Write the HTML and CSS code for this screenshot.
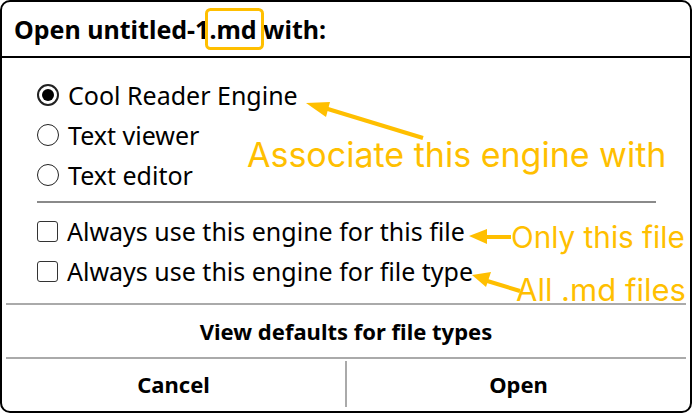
FILE: index.html
```html
<!DOCTYPE html>
<html>
<head>
<meta charset="utf-8">
<link rel="stylesheet" href="styles.css">
</head>
<body>
<div class="dialog">
  <div class="title">Open untitled-1<span class="hl">.md</span> with:</div>
  <div class="body">
    <div class="group">
      <div class="row"><span class="radio checked"></span><span class="label">Cool Reader Engine</span></div>
      <div class="row"><span class="radio"></span><span class="label">Text viewer</span></div>
      <div class="row"><span class="radio"></span><span class="label">Text editor</span></div>
    </div>
    <div class="inner-sep"></div>
    <div class="group">
      <div class="row"><span class="check"></span><span class="label">Always use this engine for this file</span></div>
      <div class="row"><span class="check"></span><span class="label">Always use this engine for file type</span></div>
    </div>
  </div>
  <div class="btn-single">View defaults for file types</div>
  <div class="btn-pair"><div class="btn">Cancel</div><div class="btn">Open</div></div>

  <svg class="arrows" width="692" height="413" viewBox="0 0 692 413">
    <rect x="206.5" y="9.5" width="56" height="39" rx="4" fill="none" stroke="#ffbf00" stroke-width="3"/>
    <g fill="#ffbf00" stroke="#ffbf00" stroke-linecap="butt">
      <line x1="423" y1="138" x2="318" y2="106" stroke-width="4"/>
      <polygon points="306,103 330,102 326,117" stroke="none"/>
      <line x1="511" y1="237" x2="482" y2="237" stroke-width="4"/>
      <polygon points="469,236 487,229 487,244" stroke="none"/>
      <line x1="520" y1="291" x2="484" y2="280" stroke-width="4"/>
      <polygon points="472,275 491,272 486,287" stroke="none"/>
    </g>
  </svg>
  <div class="note note-assoc">Associate this engine with</div>
  <div class="note note-only">Only this file</div>
  <div class="note note-all">All .md files</div>
</div>
</body>
</html>
```
FILE: styles.css
```css
* { box-sizing: border-box; }
html, body { margin: 0; padding: 0; background: #fff; }
body { width: 692px; height: 413px; overflow: hidden; font-family: "Noto Sans", "Open Sans", sans-serif; color: #000; }

.dialog {
  position: relative;
  width: 692px;
  height: 413px;
  border: 2px solid #000;
  border-radius: 10px;
  display: flex;
  flex-direction: column;
  overflow: hidden;
}

.title {
  height: 56px;
  border-bottom: 2px solid #000;
  padding-left: 12px;
  font-size: 25px;
  font-weight: 700;
  line-height: 54px;
  white-space: nowrap;
}

.body {
  flex: 1;
  padding: 17px 34px 0 35px;
  display: flex;
  flex-direction: column;
}
.group { display: flex; flex-direction: column; }
.row {
  height: 40px;
  display: flex;
  align-items: center;
  gap: 9px;
  font-size: 25px;
}
.label { white-space: nowrap; line-height: 1; }
.radio {
  width: 22px; height: 22px;
  border: 1px solid #222;
  border-radius: 50%;
  display: inline-flex;
  align-items: center;
  justify-content: center;
  flex: none;
}
.radio.checked { border-width: 2px; }
.radio.checked::before {
  content: "";
  width: 12px; height: 12px;
  border-radius: 50%;
  background: #000;
}
.check {
  width: 21px; height: 21px;
  border: 1px solid #333;
  border-radius: 3px;
  flex: none;
}
.inner-sep {
  height: 2px;
  background: #8a8a8a;
  margin: 6px 0 8px 0;
}

.btn-single {
  height: 56px;
  border-top: 2px solid #aaa;
  border-bottom: 2px solid #aaa;
  margin: 0 4px;
  display: flex;
  align-items: center;
  justify-content: center;
  font-weight: 700;
  font-size: 22px;
}
.btn-pair {
  height: 52px;
  display: flex;
  padding: 2px 0 4px;
}
.btn {
  flex: 1;
  display: flex;
  align-items: center;
  justify-content: center;
  font-weight: 700;
  font-size: 22px;
}
.btn + .btn { border-left: 2px solid #aaa; }

.arrows { position: absolute; left: -2px; top: -2px; pointer-events: none; }
.note {
  position: absolute;
  color: #ffbf00;
  font-family: "Inter", "Noto Sans", sans-serif;
  font-weight: 400;
  white-space: nowrap;
  line-height: 1;
}
.note-assoc { left: 245px; top: 136px; font-size: 34px; }
.note-only { left: 509px; top: 221px; font-size: 29.7px; }
.note-all { left: 514px; top: 272px; font-size: 31px; }
```
